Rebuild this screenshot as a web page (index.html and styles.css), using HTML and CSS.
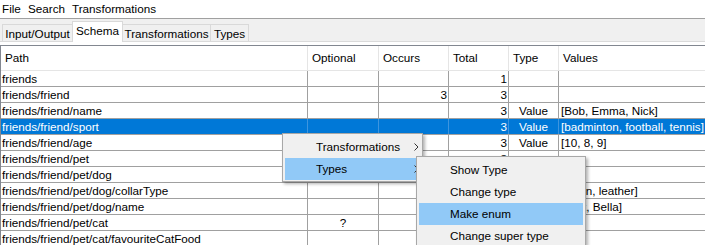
FILE: index.html
```html
<!DOCTYPE html>
<html>
<head>
<meta charset="utf-8">
<link rel="stylesheet" href="styles.css">
</head>
<body>
<div class="menubar">
  <span class="mb-item w-file">File</span>
  <span class="mb-item w-search">Search</span>
  <span class="mb-item">Transformations</span>
</div>
<div class="tabstrip">
  <div class="tab t-io">Input/Output</div>
  <div class="tab active t-schema">Schema</div>
  <div class="tab t-trans">Transformations</div>
  <div class="tab t-types">Types</div>
</div>
<div class="panel">
  <div class="table">
    <div class="row head">
      <div class="c">Path</div><div class="c">Optional</div><div class="c">Occurs</div><div class="c">Total</div><div class="c">Type</div><div class="c">Values</div>
    </div>
    <div class="row">
      <div class="c">friends</div><div class="c"></div><div class="c num"></div><div class="c num">1</div><div class="c ctr"></div><div class="c"></div>
    </div>
    <div class="row">
      <div class="c">friends/friend</div><div class="c"></div><div class="c num">3</div><div class="c num">3</div><div class="c ctr"></div><div class="c"></div>
    </div>
    <div class="row">
      <div class="c">friends/friend/name</div><div class="c"></div><div class="c num"></div><div class="c num">3</div><div class="c ctr">Value</div><div class="c">[Bob, Emma, Nick]</div>
    </div>
    <div class="row sel">
      <div class="c">friends/friend/sport</div><div class="c"></div><div class="c num"></div><div class="c num">3</div><div class="c ctr">Value</div><div class="c">[badminton, football, tennis]</div>
    </div>
    <div class="row">
      <div class="c">friends/friend/age</div><div class="c"></div><div class="c num"></div><div class="c num">3</div><div class="c ctr">Value</div><div class="c">[10, 8, 9]</div>
    </div>
    <div class="row">
      <div class="c">friends/friend/pet</div><div class="c"></div><div class="c num"></div><div class="c num">3</div><div class="c ctr"></div><div class="c"></div>
    </div>
    <div class="row">
      <div class="c">friends/friend/pet/dog</div><div class="c"></div><div class="c num"></div><div class="c num"></div><div class="c ctr"></div><div class="c"></div>
    </div>
    <div class="row">
      <div class="c">friends/friend/pet/dog/collarType</div><div class="c"></div><div class="c num"></div><div class="c num"></div><div class="c ctr"></div><div class="c">[nylon, leather]</div>
    </div>
    <div class="row">
      <div class="c">friends/friend/pet/dog/name</div><div class="c"></div><div class="c num"></div><div class="c num"></div><div class="c ctr"></div><div class="c">[Max, Bella]</div>
    </div>
    <div class="row">
      <div class="c">friends/friend/pet/cat</div><div class="c ctr">?</div><div class="c num"></div><div class="c num"></div><div class="c ctr"></div><div class="c"></div>
    </div>
    <div class="row">
      <div class="c">friends/friend/pet/cat/favouriteCatFood</div><div class="c"></div><div class="c num"></div><div class="c num"></div><div class="c ctr"></div><div class="c"></div>
    </div>
  </div>
</div>

<div class="ctx main">
  <div class="mi">Transformations<svg class="arr" width="5" height="8" viewBox="0 0 5 8"><path d="M0.5 0.5 L4 4 L0.5 7.5" fill="none" stroke="#333" stroke-width="1"/></svg></div>
  <div class="mi hl">Types<svg class="arr" width="5" height="8" viewBox="0 0 5 8"><path d="M0.5 0.5 L4 4 L0.5 7.5" fill="none" stroke="#333" stroke-width="1"/></svg></div>
</div>
<div class="ctx sub">
  <div class="mi">Show Type</div>
  <div class="mi">Change type</div>
  <div class="mi hl">Make enum</div>
  <div class="mi">Change super type</div>
</div>
</body>
</html>
```
FILE: styles.css
```css
html, body {
  margin: 0;
  padding: 0;
  background: #fff;
  overflow: hidden;
}
body {
  font-family: "Liberation Sans", Arial, sans-serif;
  font-size: 11.7px;
  color: #000;
  width: 705px;
  height: 245px;
  position: relative;
}
.menubar {
  height: 18px;
  display: flex;
  align-items: center;
  padding-left: 2px;
  border-bottom: 1px solid #a0a0a0;
  line-height: 16px;
}
.mb-item { white-space: nowrap; }
.w-file { width: 26px; }
.w-search { width: 44px; }

.tabstrip {
  height: 22px;
  background: #f0f0f0;
  border-bottom: 1px solid #dadada;
  display: flex;
  align-items: flex-end;
  padding-left: 2px;
}
.tab {
  height: 16px;
  line-height: 17px;
  border: 1px solid #d9d9d9;
  border-bottom: none;
  background: #f0f0f0;
  text-align: center;
  white-space: nowrap;
  box-sizing: content-box;
  margin-right: -1px;
}
.tab.active {
  height: 20px;
  line-height: 17px;
  background: #fff;
  margin-bottom: -1px;
  position: relative;
  z-index: 1;
}
.t-io { width: 69px; }
.t-schema { width: 49px; }
.t-trans { width: 87px; }
.t-types { width: 37px; }

.panel {
  padding-top: 3px;
  height: 200px;
  overflow: hidden;
}
.table {
  border-top: 1px solid #828790;
  border-left: 1px solid #828790;
  width: 720px;
}
.row {
  display: grid;
  grid-template-columns: 307px 71px 70px 60px 50px 1fr;
  height: 16px;
  box-sizing: border-box;
  border-bottom: 1px solid #a0a0a0;
}
.row .c {
  border-right: 1px solid #a0a0a0;
  padding: 0 2px;
  line-height: 15px;
  white-space: nowrap;
  overflow: hidden;
}
.row .c:first-child { padding-left: 1px; }
.row .c.num { text-align: right; padding-right: 1px; }
.row .c.ctr { text-align: center; }
.row.head {
  height: 25px;
  border-bottom: 1px solid #e5e5e5;
}
.row.head .c {
  border-right: 1px solid #e5e5e5;
  line-height: 24px;
  padding-left: 4px;
}
.row.sel {
  background: #0078d7;
  color: #fff;
}
.row.sel .c { border-right-color: #3d95df; }

.ctx {
  position: absolute;
  background: #f0f0f0;
  border: 1px solid #a8a8a8;
  padding: 2px;
  box-shadow: 2px 2px 3px rgba(0,0,0,0.3);
  box-sizing: border-box;
  overflow: hidden;
}
.ctx.main {
  left: 282px;
  top: 133px;
  width: 141px;
  height: 49px;
}
.ctx.sub {
  left: 416px;
  top: 156px;
  width: 170px;
  height: 89px;
  border-bottom: none;
  z-index: 2;
}
.mi {
  height: 22px;
  line-height: 22px;
  padding-left: 31px;
  position: relative;
  white-space: nowrap;
}
.mi.hl { background: #91c9f7; }
.arr {
  position: absolute;
  left: 129px;
  top: 7px;
}
```
